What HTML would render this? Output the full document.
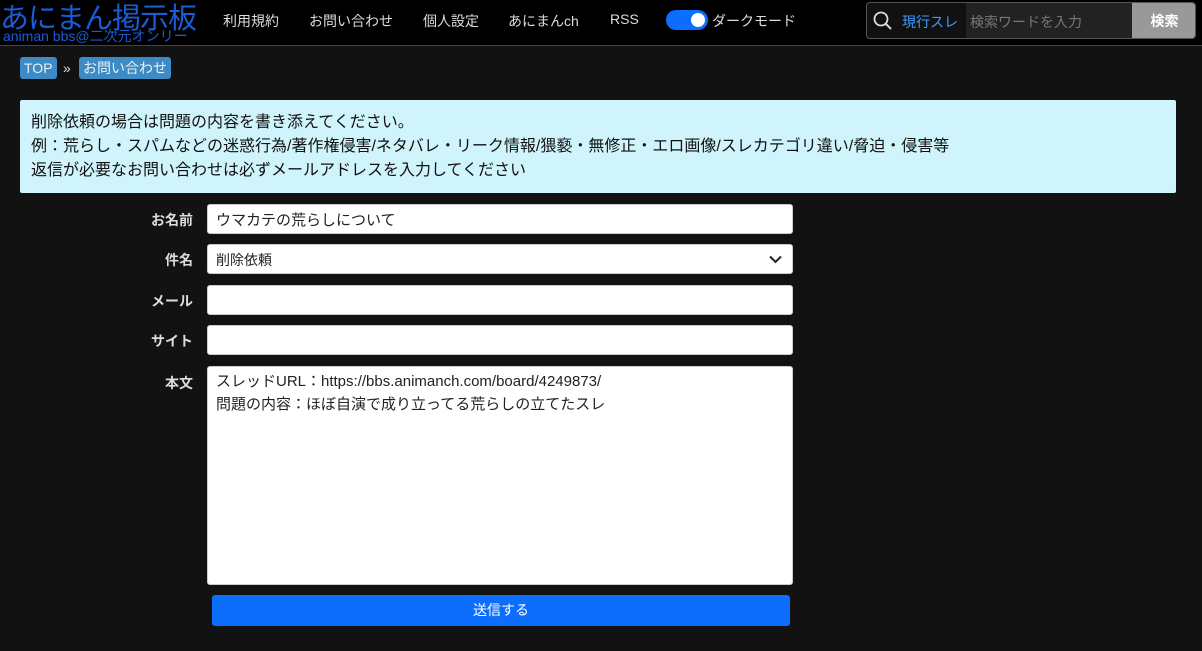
<!DOCTYPE html>
<html><head><meta charset="utf-8"><style>
*{box-sizing:border-box;margin:0;padding:0}
body{width:1202px;height:651px;background:#121212;font-family:"Liberation Sans","Noto Sans CJK JP",sans-serif;color:#ddd;overflow:hidden;position:relative}
.hdr{position:absolute;left:0;top:0;width:1202px;height:46px;background:#000;border-bottom:1px solid #444}
.logo{position:absolute;left:0;top:-5px;font-size:29px;color:#1a5bd6;letter-spacing:-1px;white-space:nowrap}
.sub{position:absolute;left:3px;top:28px;font-size:14px;color:#1a5bd6;white-space:nowrap;line-height:16px}
.nav{position:absolute;top:11px;font-size:14px;color:#ddd}
.tog{position:absolute;left:666px;top:10px;width:42px;height:20px;border-radius:10px;background:#0d6efd}
.tog::after{content:"";position:absolute;right:3px;top:3px;width:14px;height:14px;border-radius:50%;background:#fff}
.srch{position:absolute;left:866px;top:2px;width:330px;height:37px;border:1px solid #555;border-radius:4px;overflow:hidden;background:#111}
.bc{position:absolute;top:57px;height:22px;background:#3d8bc4;color:#e8f0f8;border-radius:3px;font-size:14px;padding:2px 4px;line-height:18px}
.info{position:absolute;left:20px;top:100px;width:1156px;height:93px;background:#cff4fc;color:#111;font-size:16px;line-height:24px;padding:11px 11px;border-radius:2px;white-space:nowrap}
.lbl{position:absolute;left:130px;width:63px;text-align:right;font-weight:bold;font-size:14px;color:#ddd}
.in{position:absolute;left:207px;width:586px;height:30px;background:#fff;border:1px solid #ccc;border-radius:3px;color:#222;font-size:15px;padding:4px 8px}
.btn{position:absolute;left:212px;top:595px;width:578px;height:31px;background:#0d6efd;border-radius:3px;color:#fff;font-size:14px;text-align:center;line-height:31px}
</style></head><body>
<div class="hdr">
<div class="logo">あにまん掲示板</div>
<div class="sub">animan bbs@二次元オンリー</div>
<div class="nav" style="left:223px">利用規約</div>
<div class="nav" style="left:309px">お問い合わせ</div>
<div class="nav" style="left:423px">個人設定</div>
<div class="nav" style="left:508px">あにまんch</div>
<div class="nav" style="left:610px">RSS</div>
<div class="tog"></div>
<div class="nav" style="left:712px">ダークモード</div>
<div class="srch">
<svg style="position:absolute;left:6px;top:8px" width="20" height="20" viewBox="0 0 20 20"><circle cx="8" cy="8" r="6.5" fill="none" stroke="#ddd" stroke-width="1.8"/><line x1="12.7" y1="12.7" x2="18" y2="18" stroke="#ddd" stroke-width="2"/></svg>
<span style="position:absolute;left:35px;top:9px;font-size:14px;color:#3d9bff">現行スレ</span>
<div style="position:absolute;left:99px;top:0;width:166px;height:37px;background:#222"><span style="position:absolute;left:4px;top:9px;font-size:14px;color:#777">検索ワードを入力</span></div>
<div style="position:absolute;left:265px;top:0;width:65px;height:37px;background:#999;color:#fff;font-size:14px;font-weight:bold;text-align:center;line-height:37px">検索</div>
</div>
</div>
<div class="bc" style="left:20px">TOP</div>
<div style="position:absolute;left:63px;top:60px;font-size:14px;color:#ddd">»</div>
<div class="bc" style="left:79px">お問い合わせ</div>
<div class="info">削除依頼の場合は問題の内容を書き添えてください。<br>例：荒らし・スパムなどの迷惑行為/著作権侵害/ネタバレ・リーク情報/猥褻・無修正・エロ画像/スレカテゴリ違い/脅迫・侵害等<br>返信が必要なお問い合わせは必ずメールアドレスを入力してください</div>
<div class="lbl" style="top:210px">お名前</div><div class="in" style="top:204px">ウマカテの荒らしについて</div>
<div class="lbl" style="top:250px">件名</div><div class="in" style="top:244px;font-size:14px;padding-top:5px">削除依頼<svg style="position:absolute;right:10px;top:10px" width="13" height="9" viewBox="0 0 13 9"><path d="M1 1.5l5.5 5.5 5.5-5.5" fill="none" stroke="#222" stroke-width="2"/></svg></div>
<div class="lbl" style="top:291px">メール</div><div class="in" style="top:285px"></div>
<div class="lbl" style="top:331px">サイト</div><div class="in" style="top:325px"></div>
<div class="lbl" style="top:373px">本文</div><div class="in" style="top:366px;height:219px;line-height:23px;padding-top:3px">スレッドURL：https://bbs.animanch.com/board/4249873/<br>問題の内容：ほぼ自演で成り立ってる荒らしの立てたスレ</div>
<div class="btn">送信する</div>
</body></html>
